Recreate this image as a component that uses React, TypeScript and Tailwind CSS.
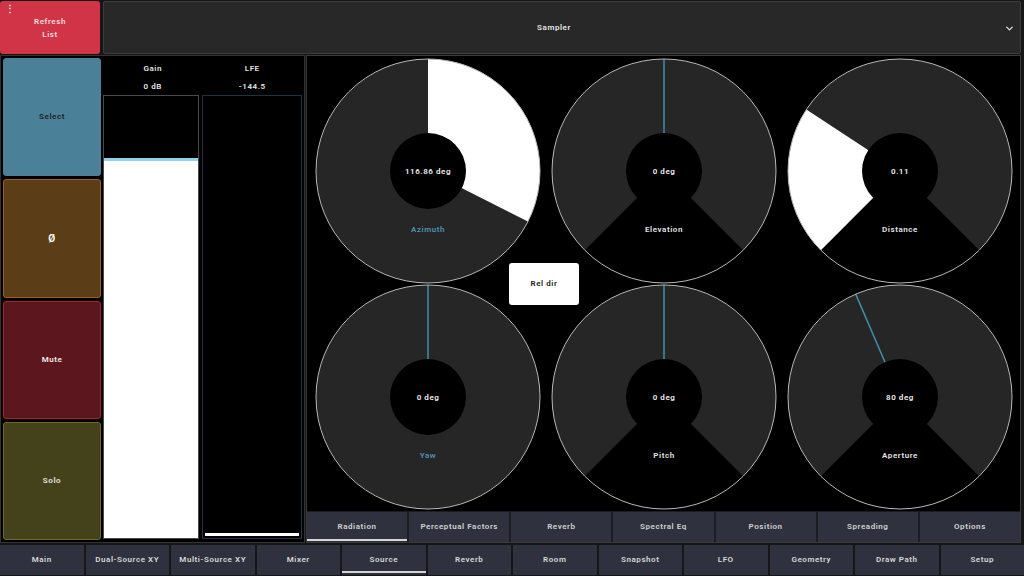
import { ChevronDown } from "lucide-react";

const FONT = { fontFamily: "Roboto, 'Liberation Sans', sans-serif" };

const C = 113;
const R = 112;

function pt(a: number, r: number) {
  const rad = (a * Math.PI) / 180;
  return [C + r * Math.sin(rad), C - r * Math.cos(rad)];
}

function wedge(a1: number, a2: number, r: number) {
  const [x1, y1] = pt(a1, r);
  const [x2, y2] = pt(a2, r);
  const large = a2 - a1 > 180 ? 1 : 0;
  return `M ${C} ${C} L ${x1} ${y1} A ${r} ${r} 0 ${large} 1 ${x2} ${y2} Z`;
}

type DialProps = {
  value: string;
  label: string;
  blue?: boolean;
  fill?: [number, number];
  line?: number;
};

// blue dials (azimuth, yaw) go all the way round, the others leave the bottom quarter open
const Dial = ({ value, label, blue, fill, line }: DialProps) => {
  const lp = line !== undefined ? pt(line, R) : null;
  return (
    <div className="relative w-[226px] h-[226px]">
      <svg width="226" height="226" viewBox="0 0 226 226" className="absolute inset-0">
        <circle cx={C} cy={C} r={R} fill="#262626" />
        {!blue && <path d={wedge(135, 225, R)} fill="#000" />}
        {fill && <path d={wedge(fill[0], fill[1], R)} fill="#fff" />}
        {lp && <line x1={C} y1={C} x2={lp[0]} y2={lp[1]} stroke="#3d8fae" strokeWidth="1.5" />}
        <circle cx={C} cy={C} r={R} fill="none" stroke="#b8b8b8" strokeWidth="1" />
        <circle cx={C} cy={C} r={38} fill="#000" />
      </svg>
      <div className="absolute left-0 right-0 top-[108px] text-center text-[8px] font-semibold tracking-[0.07em] text-[#f0f0f0]">
        {value}
      </div>
      <div
        className={`absolute left-0 right-0 top-[166px] text-center text-[8px] font-semibold tracking-[0.07em] ${
          blue ? "text-[#4b93b3]" : "text-[#e6e6e6]"
        }`}
      >
        {label}
      </div>
    </div>
  );
};

const sideButtons = [
  { label: "Select", cls: "bg-[#4a8199] border-[#4a8199] text-[#1d1d1d]" },
  { label: "Ø", cls: "bg-[#5b3d18] border-[#9a6322] text-white text-[10px]" },
  { label: "Mute", cls: "bg-[#5c161d] border-[#a1222f] text-[#f0f0f0]" },
  { label: "Solo", cls: "bg-[#43421a] border-[#6c6a22] text-[#e8e8e8]" },
];

const subTabs = ["Radiation", "Perceptual Factors", "Reverb", "Spectral Eq", "Position", "Spreading", "Options"];
const navTabs = [
  "Main",
  "Dual-Source XY",
  "Multi-Source XY",
  "Mixer",
  "Source",
  "Reverb",
  "Room",
  "Snapshot",
  "LFO",
  "Geometry",
  "Draw Path",
  "Setup",
];

export default function App() {
  return (
    <div className="w-[1024px] h-[576px] bg-[#161616] flex flex-col overflow-hidden select-none" style={FONT}>
      {/* top bar */}
      <div className="flex gap-[3px] h-[53px] mt-[1px] pr-[3px]">
        <div className="relative w-[100px] rounded-[3px] bg-[#d13447] flex flex-col items-center justify-center text-[8px] font-semibold leading-[13px] tracking-[0.07em] text-[#f3dfe2]">
          <span className="absolute left-[5px] top-[3px] text-[10px] leading-[10px] font-bold text-[#f3dfe2]">⋮</span>
          <span>Refresh</span>
          <span>List</span>
        </div>
        <div className="relative flex-1 bg-[#282828] border border-[#3d3d3d] rounded-[2px] flex items-center justify-center pr-[16px] text-[8px] font-semibold tracking-[0.07em] text-[#e8e8e8]">
          Sampler
          <ChevronDown className="absolute right-[5px] top-[21px] text-[#e0e0e0]" size={11} strokeWidth={3} />
        </div>
      </div>

      {/* main */}
      <div className="flex gap-[1px] mt-[1px] h-[488px]">
        {/* left channel strip */}
        <div className="w-[305px] bg-black border border-[#333] flex gap-[2px] p-[2px]">
          <div className="w-[98px] flex flex-col gap-[3px]">
            {sideButtons.map((b) => (
              <div
                key={b.label}
                className={`flex-1 rounded-[3px] border flex items-center justify-center text-[8px] font-semibold tracking-[0.07em] ${b.cls}`}
              >
                {b.label}
              </div>
            ))}
          </div>
          <div className="flex-1 flex flex-col">
            <div className="flex h-[37px] text-[8px] font-semibold tracking-[0.07em] text-[#e6e6e6]">
              <div className="flex-1 flex flex-col items-center pt-[5px] gap-[7px] leading-[11px]">
                <span>Gain</span>
                <span>0 dB</span>
              </div>
              <div className="flex-1 flex flex-col items-center pt-[5px] gap-[7px] leading-[11px]">
                <span>LFE</span>
                <span>-144.5</span>
              </div>
            </div>
            <div className="flex-1 flex gap-[3px] pb-[1px]">
              <div className="flex-1 border border-[#4a4a4a] flex flex-col">
                <div className="h-[62px]" />
                <div className="h-[3px] bg-[#8fd3ec]" />
                <div className="flex-1 bg-white" />
              </div>
              <div className="flex-1 border border-[#1e3446] flex flex-col justify-end p-[2px]">
                <div className="h-[3px] bg-white" />
              </div>
            </div>
          </div>
        </div>

        {/* right radiation panel */}
        <div className="flex-1 bg-black border border-[#3a3a3a] flex flex-col mr-[3px]">
          <div className="relative flex-1 flex flex-col pl-[8px] pt-[2px]">
            <div className="flex gap-[10px]">
              <Dial value="116.86 deg" label="Azimuth" blue fill={[0, 116.86]} />
              <Dial value="0 deg" label="Elevation" line={0} />
              <Dial value="0.11" label="Distance" fill={[-135, -56.7]} />
            </div>
            <div className="flex gap-[10px]">
              <Dial value="0 deg" label="Yaw" blue line={0} />
              <Dial value="0 deg" label="Pitch" line={0} />
              <Dial value="80 deg" label="Aperture" line={-23.3} />
            </div>
            <div className="absolute left-[202px] top-[207px] w-[70px] h-[42px] bg-white rounded-[3px] flex items-center justify-center text-[8px] font-semibold tracking-[0.07em] text-[#1a1a1a]">
              Rel dir
            </div>
          </div>
          <div className="h-[31px] flex gap-[2px] bg-[#1c1d22] pt-[1px]">
            {subTabs.map((t, i) => (
              <div
                key={t}
                className="relative flex-1 bg-[#2f323e] flex items-center justify-center text-[8px] font-semibold tracking-[0.07em] text-[#d2d2d2]"
              >
                {t}
                {i === 0 && <div className="absolute left-0 right-0 bottom-[1px] h-[2px] bg-[#d6d6d6]" />}
              </div>
            ))}
          </div>
        </div>
      </div>

      {/* bottom nav */}
      <div className="flex gap-[2px] h-[30px] mt-[2px]">
        {navTabs.map((t) => (
          <div
            key={t}
            className="relative flex-1 bg-[#2f323e] flex items-center justify-center text-[8px] font-semibold tracking-[0.07em] text-[#d8d8d8]"
          >
            {t}
            {t === "Source" && <div className="absolute left-0 right-0 bottom-[2px] h-[2px] bg-[#d6d6d6]" />}
          </div>
        ))}
      </div>
    </div>
  );
}
